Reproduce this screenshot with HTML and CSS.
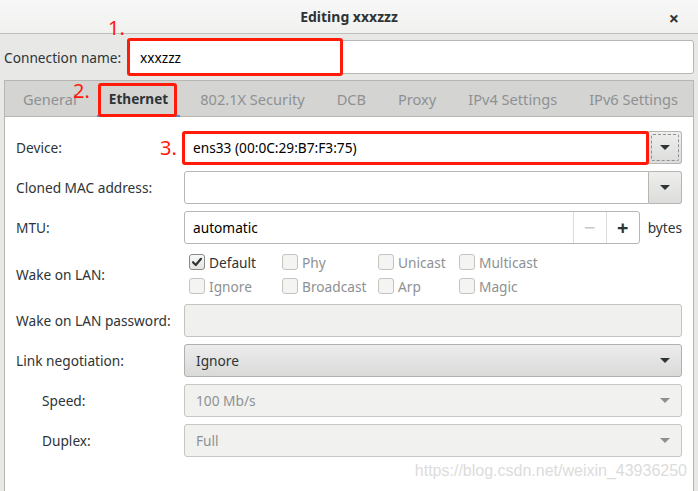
FILE: index.html
```html
<!DOCTYPE html>
<html>
<head>
<meta charset="utf-8">
<link rel="stylesheet" href="styles.css">
</head>
<body>
<div class="window">
  <div class="titlebar">
    <span class="title">Editing xxxzzz</span>
    <span class="close">×</span>
  </div>
  <div class="main">
    <div class="conn-row">
      <span class="conn-label">Connection name:</span>
      <div class="entry conn-entry">xxxzzz</div>
    </div>
    <div class="notebook">
      <div class="tabs">
        <span class="tab">General</span>
        <span class="tab active">Ethernet</span>
        <span class="tab">802.1X Security</span>
        <span class="tab">DCB</span>
        <span class="tab">Proxy</span>
        <span class="tab">IPv4 Settings</span>
        <span class="tab">IPv6 Settings</span>
      </div>
      <div class="page">
        <div class="form">
          <span class="label">Device:</span>
          <div class="combo">
            <div class="entry combo-entry">ens33 (00:0C:29:B7:F3:75)</div>
            <div class="combo-btn focus"><span class="arrow"></span></div>
          </div>

          <span class="label">Cloned MAC address:</span>
          <div class="combo">
            <div class="entry combo-entry"></div>
            <div class="combo-btn"><span class="arrow"></span></div>
          </div>

          <span class="label">MTU:</span>
          <div class="mtu">
            <div class="spin">
              <span class="spin-text">automatic</span>
              <span class="spin-btn dim">−</span>
              <span class="spin-btn">+</span>
            </div>
            <span class="unit">bytes</span>
          </div>

          <span class="label">Wake on LAN:</span>
          <div class="checks">
            <span class="check on"><span class="box"><svg width="12" height="12" viewBox="0 0 12 12"><path d="M2 6.2 L4.8 9 L10 2.8" fill="none" stroke="#2e3436" stroke-width="2.2" stroke-linecap="round" stroke-linejoin="round"/></svg></span>Default</span>
            <span class="check"><span class="box"></span>Phy</span>
            <span class="check"><span class="box"></span>Unicast</span>
            <span class="check"><span class="box"></span>Multicast</span>
            <span class="check"><span class="box"></span>Ignore</span>
            <span class="check"><span class="box"></span>Broadcast</span>
            <span class="check"><span class="box"></span>Arp</span>
            <span class="check"><span class="box"></span>Magic</span>
          </div>

          <span class="label">Wake on LAN password:</span>
          <div class="entry disabled"></div>

          <span class="label">Link negotiation:</span>
          <div class="button-combo">Ignore<span class="arrow"></span></div>

          <span class="label sub">Speed:</span>
          <div class="button-combo disabled">100 Mb/s<span class="arrow dim"></span></div>

          <span class="label sub">Duplex:</span>
          <div class="button-combo disabled">Full<span class="arrow dim"></span></div>
        </div>
        <div class="watermark">https://blog.csdn.net/weixin_43936250</div>
      </div>
    </div>
  </div>

  <span class="anno n1">1.</span>
  <span class="anno n2">2.</span>
  <span class="anno n3">3.</span>
  <div class="redbox r1"></div>
  <div class="redbox r2"></div>
  <div class="redbox r3"></div>
</div>
</body>
</html>
```

FILE: styles.css
```css
html, body {
  margin: 0;
  padding: 0;
}
body {
  font-family: "Noto Sans", "Open Sans", sans-serif;
  font-size: 13.7px;
  color: #2e3436;
}
.window {
  position: relative;
  width: 698px;
  height: 491px;
  overflow: hidden;
  background: #e8e8e7;
  display: flex;
  flex-direction: column;
}
.titlebar {
  height: 33px;
  flex: none;
  background: linear-gradient(#f7f7f7, #f1f1f0);
  border-bottom: 1px solid #bfbfbc;
  display: flex;
  align-items: center;
  justify-content: center;
  position: relative;
}
.title {
  font-weight: bold;
  font-size: 14px;
  color: #2e3436;
}
.close {
  position: absolute;
  right: 19px;
  top: 6px;
  font-size: 18px;
  font-weight: bold;
  color: #2e3436;
}
.main {
  flex: 1;
  display: flex;
  flex-direction: column;
  padding: 6px 4px 0 4px;
}
.conn-row {
  display: flex;
  align-items: center;
  height: 34px;
}
.conn-label {
  width: 124px;
  flex: none;
}
.entry {
  box-sizing: border-box;
  height: 33px;
  background: #ffffff;
  border: 1px solid #b6b6b3;
  border-radius: 3px;
  display: flex;
  align-items: center;
  padding: 0 8px;
  color: #000;
}
.conn-entry {
  flex: 1;
  height: 34px;
  padding-left: 11px;
}
.notebook {
  margin-top: 6px;
  flex: 1;
  display: flex;
  flex-direction: column;
  border: 1px solid #b6b6b3;
  border-bottom: none;
}
.tabs {
  height: 35px;
  flex: none;
  background: #d4d4d3;
  border-bottom: 1px solid #b6b6b3;
  display: flex;
  align-items: stretch;
  padding-left: 6px;
  gap: 8px;
}
.tab {
  flex: none;
  white-space: nowrap;
  display: flex;
  align-items: center;
  padding: 0 12px;
  color: #8e9192;
  font-size: 14.6px;
  box-sizing: border-box;
  border-bottom: 2px solid transparent;
  margin-bottom: -1px;
  padding-top: 1px;
}
.tab.active {
  color: #2e3436;
  font-weight: bold;
  font-size: 13.6px;
  border-bottom-color: #4a90d9;
}
.page {
  flex: 1;
  background: #ffffff;
  padding: 14px 11px 0 11px;
  display: flex;
  flex-direction: column;
}
.form {
  display: grid;
  grid-template-columns: 168px 1fr;
  row-gap: 7px;
  align-items: center;
}
.label {
  color: #2e3436;
}
.label.sub {
  padding-left: 26px;
}
.combo {
  display: flex;
  height: 33px;
}
.combo-entry {
  flex: 1;
  border-radius: 3px 0 0 3px;
}
.combo-btn {
  width: 33px;
  box-sizing: border-box;
  border: 1px solid #b6b6b3;
  border-left: none;
  border-radius: 0 3px 3px 0;
  background: linear-gradient(#eeeeed, #dcdcdb);
  display: flex;
  align-items: center;
  justify-content: center;
  position: relative;
}
.combo-btn.focus::after {
  content: "";
  position: absolute;
  inset: 2px;
  border: 1px dashed #8e9192;
  border-radius: 2px;
}
.arrow {
  width: 0;
  height: 0;
  border-left: 5px solid transparent;
  border-right: 5px solid transparent;
  border-top: 5px solid #2e3436;
}
.arrow.dim {
  border-top-color: #8e9192;
}
.mtu {
  display: flex;
  align-items: center;
  gap: 8px;
}
.spin {
  flex: 1;
  height: 33px;
  box-sizing: border-box;
  border: 1px solid #b6b6b3;
  border-radius: 3px;
  display: flex;
  align-items: stretch;
  background: #fff;
}
.spin-text {
  flex: 1;
  display: flex;
  align-items: center;
  padding-left: 8px;
  color: #000;
}
.spin-btn {
  width: 32px;
  border-left: 1px solid #dcdcda;
  display: flex;
  align-items: center;
  justify-content: center;
  font-size: 20px;
  font-weight: bold;
  color: #2e3436;
}
.spin-btn.dim {
  color: #c8c8c6;
  font-weight: normal;
}
.unit {
  color: #2e3436;
}
.checks {
  display: grid;
  grid-template-columns: 93px 96px 81px 1fr;
  grid-auto-rows: 24px;
  padding-left: 5px;
  height: 46px;
  align-content: center;
}
.check {
  display: flex;
  align-items: center;
  color: #8e9192;
}
.check.on {
  color: #2e3436;
}
.box {
  width: 16px;
  height: 16px;
  box-sizing: border-box;
  border: 1px solid #c3c3c0;
  border-radius: 3px;
  background: #f4f4f3;
  margin-right: 4px;
  display: flex;
  align-items: center;
  justify-content: center;
}
.check.on .box {
  border-color: #8a8a87;
  background: linear-gradient(#f8f8f8, #e4e4e2);
}
.entry.disabled {
  background: #f0f0ef;
  border-color: #c3c3c0;
}
.button-combo {
  height: 33px;
  box-sizing: border-box;
  border: 1px solid #b0b0ad;
  border-radius: 3px;
  background: linear-gradient(#ececec, #dadad9);
  display: flex;
  align-items: center;
  justify-content: space-between;
  padding: 0 11px 0 11px;
  color: #2e3436;
}
.button-combo.disabled {
  background: #f1f1f0;
  border-color: #c6c6c3;
  color: #8e9192;
}
.watermark {
  align-self: flex-end;
  margin-top: 5px;
  margin-right: -5px;
  font-family: "Liberation Sans", Arial, sans-serif;
  font-size: 16px;
  color: #dcdcdc;
}
.anno {
  position: absolute;
  color: #ff1a0a;
  font-family: "Noto Sans", sans-serif;
  font-size: 20px;
  line-height: 20px;
}
.n1 { left: 108px; top: 18px; }
.n2 { left: 73px; top: 81px; }
.n3 { left: 160px; top: 138px; }
.redbox {
  position: absolute;
  border: 3px solid #ff1a0a;
  border-radius: 3px;
  box-sizing: border-box;
}
.r1 { left: 127px; top: 38px; width: 216px; height: 38px; }
.r2 { left: 98px; top: 83px; width: 79px; height: 34px; }
.r3 { left: 182px; top: 131px; width: 467px; height: 34px; }
```
